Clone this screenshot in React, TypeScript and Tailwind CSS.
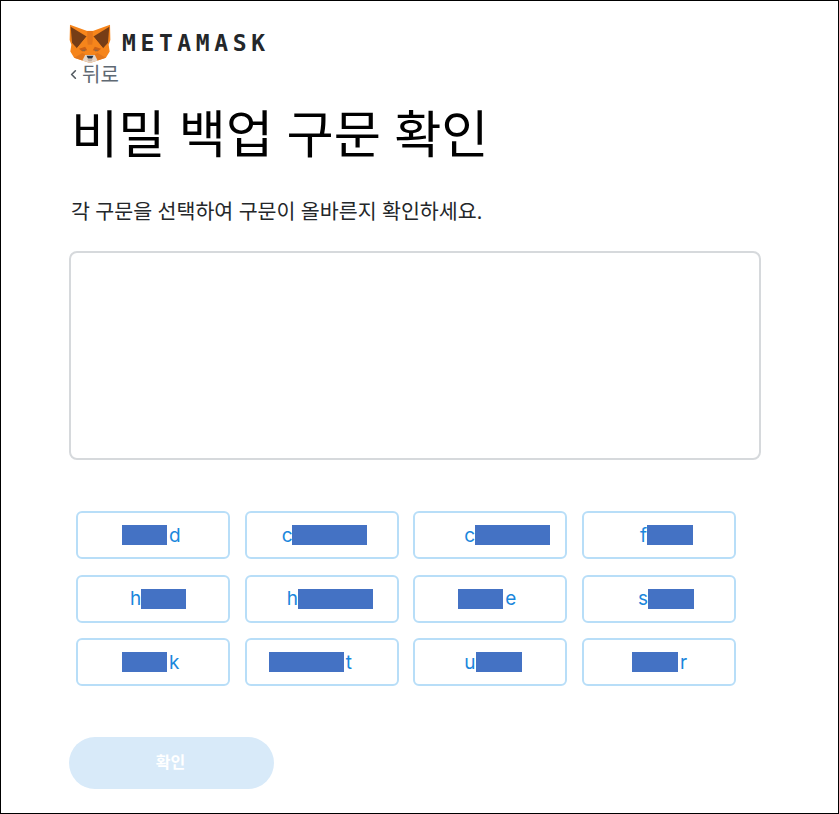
import { ChevronLeft } from "lucide-react";

const words = [
    { lead: "", width: "w-[45px]", tail: "d", offset: "pl-[44px]" },
    { lead: "c", width: "w-[75px]", tail: "", offset: "pl-[35px]" },
    { lead: "c", width: "w-[75px]", tail: "", offset: "pl-[49px]" },
    { lead: "f", width: "w-[46px]", tail: "", offset: "pl-[56px]" },
    { lead: "h", width: "w-[45px]", tail: "", offset: "pl-[52px]" },
    { lead: "h", width: "w-[75px]", tail: "", offset: "pl-[40px]" },
    { lead: "", width: "w-[45px]", tail: "e", offset: "pl-[43px]" },
    { lead: "s", width: "w-[46px]", tail: "", offset: "pl-[54px]" },
    { lead: "", width: "w-[45px]", tail: "k", offset: "pl-[44px]" },
    { lead: "", width: "w-[75px]", tail: "t", offset: "pl-[22px]" },
    { lead: "u", width: "w-[46px]", tail: "", offset: "pl-[49px]" },
    { lead: "", width: "w-[46px]", tail: "r", offset: "pl-[48px]" },
];

function FoxLogo() {
    return (
        <svg width="42" height="39" viewBox="0 0 120 113" className="shrink-0">
            <polygon points="2,2 52,20 68,20 118,2 119,46 114,60 117,80 106,98 82,106 60,113 38,106 14,98 3,80 6,60 1,46" fill="#f6851b" />
            <polygon points="4,8 50,36 22,70 8,54" fill="#763d16" />
            <polygon points="116,8 70,36 98,70 112,54" fill="#763d16" />
            <polygon points="52,20 68,20 68,60 52,60" fill="#e4761b" />
            <polygon points="22,70 50,36 54,64 40,72" fill="#f6851b" />
            <polygon points="98,70 70,36 66,64 80,72" fill="#f6851b" />
            <polygon points="28,72 46,66 52,76 38,80" fill="#cd6116" />
            <polygon points="92,72 74,66 68,76 82,80" fill="#cd6116" />
            <polygon points="34,75 48,74 44,80" fill="#8a6a4a" />
            <polygon points="86,75 72,74 76,80" fill="#8a6a4a" />
            <polygon points="14,98 38,84 46,88 38,106" fill="#e2761b" />
            <polygon points="106,98 82,84 74,88 82,106" fill="#e2761b" />
            <polygon points="38,106 46,90 74,90 82,106 60,113" fill="#e4d5c8" />
            <polygon points="50,92 70,92 66,100 54,100" fill="#233447" />
            <polygon points="52,102 68,102 64,108 56,108" fill="#c0ad9e" />
        </svg>
    );
}

export default function App() {
    return (
        <div className="box-border h-[814px] w-[839px] border border-black bg-white pl-[68px] font-['Noto_Sans','Noto_Sans_CJK_KR',sans-serif]">
            <div className="box-content flex h-[38px] items-center pt-[23px]">
                <FoxLogo />
                <span className="ml-[11px] font-['DejaVu_Sans_Mono',monospace] text-[23px] leading-none font-bold tracking-[4.6px] text-[#24272a]">
                    METAMASK
                </span>
            </div>

            <div className="flex h-[24px] items-center pt-[1px] text-[20px] leading-none text-[#5f6973]">
                <ChevronLeft className="ml-[-3px] h-[15px] w-[15px] text-[#535a61]" strokeWidth={2.6} />
                <span className="ml-[1px]">뒤로</span>
            </div>

            <h1 className="mt-[15px] pl-[2px] text-[51.3px] leading-[64px] font-normal text-black">
                비밀 백업 구문 확인
            </h1>

            <p className="mt-[32px] pl-[2px] text-[20.6px] leading-[28px] text-[#24272a]">
                각 구문을 선택하여 구문이 올바른지 확인하세요.
            </p>

            <div className="mt-[26px] box-border h-[209px] w-[692px] rounded-lg border-2 border-[#d6d9dc]" />

            <div className="mt-[51px] ml-[7px] grid w-[660px] grid-cols-4 gap-x-[14.5px] gap-y-[15.5px]">
                {words.map((word, i) => (
                    <button
                        key={i}
                        type="button"
                        className={`box-border flex h-[48px] items-center rounded-md border-2 border-[#b8def8] font-['Inter',sans-serif] text-[19px] leading-none text-[#1b87dc] ${word.offset}`}
                    >
                        {word.lead && <span>{word.lead}</span>}
                        <span className={`h-5 bg-[#4472c4] ${word.width}`} />
                        {word.tail && <span className="ml-[2px]">{word.tail}</span>}
                    </button>
                ))}
            </div>

            <button
                type="button"
                className="mt-[51px] h-[52px] w-[205px] rounded-[26px] bg-[#d8eaf9] pr-[2px] pb-[2px] text-[16px] font-bold text-white"
            >
                확인
            </button>
        </div>
    );
}
